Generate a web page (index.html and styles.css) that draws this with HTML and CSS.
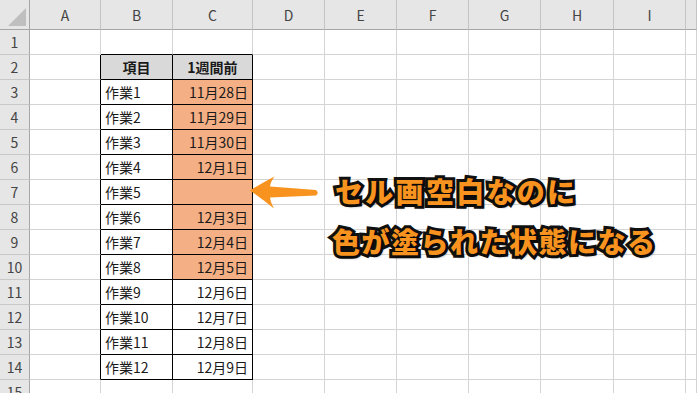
FILE: index.html
```html
<!DOCTYPE html>
<html lang="ja">
<head>
<meta charset="utf-8">
<link rel="stylesheet" href="styles.css">
</head>
<body>
<div class="sheet">
  <div class="row head">
    <div class="corner"><span class="tri"></span></div>
    <div class="hd">A</div><div class="hd">B</div><div class="hd">C</div><div class="hd">D</div><div class="hd">E</div><div class="hd">F</div><div class="hd">G</div><div class="hd">H</div><div class="hd">I</div><div class="hd"></div>
  </div>
  <div class="row">
    <div class="rh">1</div><div class="c"></div><div class="c top"></div><div class="c top"></div>
    <div class="c"></div><div class="c"></div><div class="c"></div><div class="c"></div><div class="c"></div><div class="c"></div><div class="c"></div>
  </div>
  <div class="row">
    <div class="rh">2</div><div class="c edge"></div><div class="c t th">項目</div><div class="c t th">1週間前</div>
    <div class="c"></div><div class="c"></div><div class="c"></div><div class="c"></div><div class="c"></div><div class="c"></div><div class="c"></div>
  </div>
  <div class="row">
    <div class="rh">3</div><div class="c edge"></div><div class="c t">作業1</div><div class="c t num fill">11月28日</div>
    <div class="c"></div><div class="c"></div><div class="c"></div><div class="c"></div><div class="c"></div><div class="c"></div><div class="c"></div>
  </div>
  <div class="row">
    <div class="rh">4</div><div class="c edge"></div><div class="c t">作業2</div><div class="c t num fill">11月29日</div>
    <div class="c"></div><div class="c"></div><div class="c"></div><div class="c"></div><div class="c"></div><div class="c"></div><div class="c"></div>
  </div>
  <div class="row">
    <div class="rh">5</div><div class="c edge"></div><div class="c t">作業3</div><div class="c t num fill">11月30日</div>
    <div class="c"></div><div class="c"></div><div class="c"></div><div class="c"></div><div class="c"></div><div class="c"></div><div class="c"></div>
  </div>
  <div class="row">
    <div class="rh">6</div><div class="c edge"></div><div class="c t">作業4</div><div class="c t num fill">12月1日</div>
    <div class="c"></div><div class="c"></div><div class="c"></div><div class="c"></div><div class="c"></div><div class="c"></div><div class="c"></div>
  </div>
  <div class="row">
    <div class="rh">7</div><div class="c edge"></div><div class="c t">作業5</div><div class="c t num fill"></div>
    <div class="c"></div><div class="c"></div><div class="c"></div><div class="c"></div><div class="c"></div><div class="c"></div><div class="c"></div>
  </div>
  <div class="row">
    <div class="rh">8</div><div class="c edge"></div><div class="c t">作業6</div><div class="c t num fill">12月3日</div>
    <div class="c"></div><div class="c"></div><div class="c"></div><div class="c"></div><div class="c"></div><div class="c"></div><div class="c"></div>
  </div>
  <div class="row">
    <div class="rh">9</div><div class="c edge"></div><div class="c t">作業7</div><div class="c t num fill">12月4日</div>
    <div class="c"></div><div class="c"></div><div class="c"></div><div class="c"></div><div class="c"></div><div class="c"></div><div class="c"></div>
  </div>
  <div class="row">
    <div class="rh">10</div><div class="c edge"></div><div class="c t">作業8</div><div class="c t num fill">12月5日</div>
    <div class="c"></div><div class="c"></div><div class="c"></div><div class="c"></div><div class="c"></div><div class="c"></div><div class="c"></div>
  </div>
  <div class="row">
    <div class="rh">11</div><div class="c edge"></div><div class="c t">作業9</div><div class="c t num">12月6日</div>
    <div class="c"></div><div class="c"></div><div class="c"></div><div class="c"></div><div class="c"></div><div class="c"></div><div class="c"></div>
  </div>
  <div class="row">
    <div class="rh">12</div><div class="c edge"></div><div class="c t">作業10</div><div class="c t num">12月7日</div>
    <div class="c"></div><div class="c"></div><div class="c"></div><div class="c"></div><div class="c"></div><div class="c"></div><div class="c"></div>
  </div>
  <div class="row">
    <div class="rh">13</div><div class="c edge"></div><div class="c t">作業11</div><div class="c t num">12月8日</div>
    <div class="c"></div><div class="c"></div><div class="c"></div><div class="c"></div><div class="c"></div><div class="c"></div><div class="c"></div>
  </div>
  <div class="row">
    <div class="rh">14</div><div class="c edge"></div><div class="c t">作業12</div><div class="c t num">12月9日</div>
    <div class="c"></div><div class="c"></div><div class="c"></div><div class="c"></div><div class="c"></div><div class="c"></div><div class="c"></div>
  </div>
  <div class="row">
    <div class="rh">15</div><div class="c"></div><div class="c"></div><div class="c"></div>
    <div class="c"></div><div class="c"></div><div class="c"></div><div class="c"></div><div class="c"></div><div class="c"></div><div class="c"></div>
  </div>

  <svg class="arrow" viewBox="240 170 90 45" width="90" height="45" aria-hidden="true">
    <path d="M250,190.5 Q262,183 274.5,176.5 Q270.5,182 270,186.5 L316,190 Q319.5,192.8 316,195.5 L270,197.5 Q270.5,202 274,208.5 Q262,199 250,190.5 Z" fill="#f7931e"/>
  </svg>
  <div class="note">
    <div class="line l1">セル画空白なのに</div>
    <div class="line">色が塗られた状態になる</div>
  </div>
</div>
</body>
</html>
```

FILE: styles.css
```css
html, body {
  margin: 0;
  padding: 0;
  background: #ffffff;
  overflow: hidden;
}

.sheet {
  position: relative;
  width: 697px;
  height: 393px;
  overflow: hidden;
  font-family: "Noto Sans CJK JP", "Noto Sans", sans-serif;
  font-size: 14px;
  color: #1a1a1a;
}

.row {
  display: grid;
  grid-template-columns: 30px 71px 72px 80px 72px 72px 72px 72px 73px 72px 1fr;
  height: 25px;
}

.row.head {
  height: 30px;
}

.row > div {
  box-sizing: border-box;
  border-right: 1px solid #d4d4d4;
  border-bottom: 1px solid #d4d4d4;
  display: flex;
  align-items: center;
  min-width: 0;
  white-space: nowrap;
}

.corner {
  position: relative;
  background: #e6e6e6;
  border-right-color: #a6a6a6 !important;
  border-bottom-color: #a6a6a6 !important;
}

.tri {
  position: absolute;
  right: 3px;
  bottom: 3px;
  width: 0;
  height: 0;
  border-left: 18px solid transparent;
  border-bottom: 18px solid #bfbfbf;
}

.hd {
  background: #e6e6e6;
  justify-content: center;
  color: #444444;
  font-size: 14px;
  padding-top: 1px;
  border-right-color: #c4c4c4 !important;
  border-bottom-color: #a6a6a6 !important;
}

.rh {
  background: #e6e6e6;
  justify-content: center;
  color: #444444;
  font-size: 14px;
  border-right-color: #a6a6a6 !important;
  border-bottom-color: #c8c8c8 !important;
}

.c {
  padding: 0 4px;
}

.c.top {
  border-bottom-color: #000 !important;
}

.c.edge {
  border-right-color: #000 !important;
}

.c.t {
  border-right-color: #000 !important;
  border-bottom-color: #000 !important;
}

.c.th {
  background: #d9d9d9;
  justify-content: center;
  font-weight: 700;
}

.c.num {
  justify-content: flex-end;
}

.c.fill {
  background: #f4b084;
}

.arrow {
  position: absolute;
  left: 240px;
  top: 170px;
}

.note {
  position: absolute;
  left: 332px;
  top: 166px;
  font-family: "Noto Sans CJK JP", sans-serif;
  font-weight: 900;
  font-size: 28px;
  line-height: 50px;
  letter-spacing: 1.5px;
  color: #f7931e;
  -webkit-text-stroke: 6px #111111;
  paint-order: stroke fill;
  text-shadow: 2px 2px 3px rgba(0, 0, 0, 0.55);
}

.line {
  white-space: nowrap;
}

.l1 {
  margin-left: 3px;
  letter-spacing: 2.3px;
}
```
